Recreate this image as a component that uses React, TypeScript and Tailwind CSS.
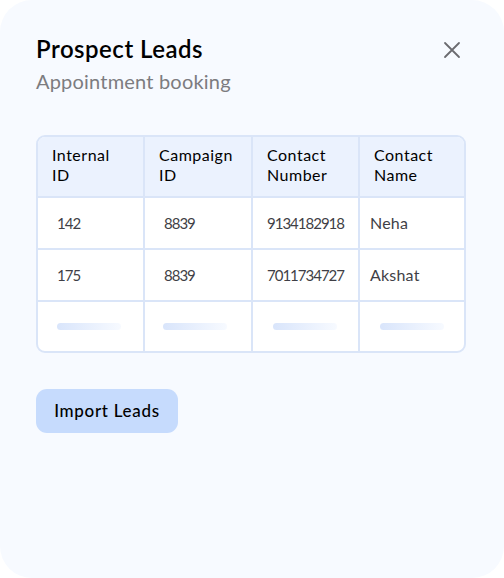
import React from "react";

const font = { fontFamily: "Lato, 'Noto Sans', sans-serif" };

function Bar() {
  return <div className="h-[7px] w-[64px] rounded-full bg-gradient-to-r from-[#d9e5fb] to-[#f7faff]" />;
}

export default function App() {
  const headers = [
    ["Internal", "ID"],
    ["Campaign", "ID"],
    ["Contact", "Number"],
    ["Contact", "Name"],
  ];
  const rows = [
    ["142", "8839", "9134182918", "Neha"],
    ["175", "8839", "7011734727", "Akshat"],
  ];
  const bodyPad = ["pl-[19px]", "pl-[19px]", "pl-[14px]", "pl-[10px]"];
  const barPad = ["pl-[19px]", "pl-[18px]", "pl-[20px]", "pl-[20px]"];
  return (
    <div className="w-[504px] h-[578px] bg-white" style={font}>
      <div className="w-full h-full rounded-[32px] bg-[#f7faff] px-[36px] pt-[34px]">
        <div className="flex items-start justify-between">
          <div>
            <div className="text-[24px] leading-[30px] font-semibold text-black tracking-[0.5px]">Prospect Leads</div>
            <div className="mt-[4px] text-[20px] leading-[26px] text-[#7c7c80] tracking-[0.2px]">Appointment booking</div>
          </div>
          <svg width="20" height="20" viewBox="0 0 20 20" className="mt-[6px] mr-[6px]">
            <path d="M3 3 L17 17 M17 3 L3 17" stroke="#6b6b70" strokeWidth="1.8" strokeLinecap="round" />
          </svg>
        </div>
        <div className="mt-[41px] w-[430px] rounded-[9px] border-2 border-[#dae5f8] overflow-hidden bg-white">
          <div className="grid grid-cols-[107px_108px_107px_106px] bg-[#ebf2fe] h-[61px] border-b-2 border-[#dae5f8]">
            {headers.map((h, i) => (
              <div key={i} className={`pl-[14px] pt-[8px] text-[16px] leading-[20px] tracking-[0.5px] text-black ${i < 3 ? "border-r-2 border-[#dae5f8]" : ""}`}>
                <div>{h[0]}</div>
                <div>{h[1]}</div>
              </div>
            ))}
          </div>
          {rows.map((r, ri) => (
            <div key={ri} className="grid grid-cols-[107px_108px_107px_106px] h-[52px] border-b-2 border-[#dae5f8]">
              {r.map((c, i) => (
                <div
                  key={i}
                  className={`flex items-center ${bodyPad[i]} text-[#3f3f46] ${i < 3 ? "text-[15px] tracking-[-1px]" : "text-[16px] tracking-[0.2px]"} ${i < 3 ? "border-r-2 border-[#dae5f8]" : ""}`}
                >
                  {c}
                </div>
              ))}
            </div>
          ))}
          <div className="grid grid-cols-[107px_108px_107px_106px] h-[49px]">
            {[0, 1, 2, 3].map((i) => (
              <div key={i} className={`flex items-center ${barPad[i]} ${i < 3 ? "border-r-2 border-[#dae5f8]" : ""}`}>
                <Bar />
              </div>
            ))}
          </div>
        </div>
        <button className="mt-[36px] h-[44px] w-[142px] rounded-[11px] bg-[#c6dbfd] text-[17px] tracking-[0.7px] font-medium text-black">
          Import Leads
        </button>
      </div>
    </div>
  );
}
